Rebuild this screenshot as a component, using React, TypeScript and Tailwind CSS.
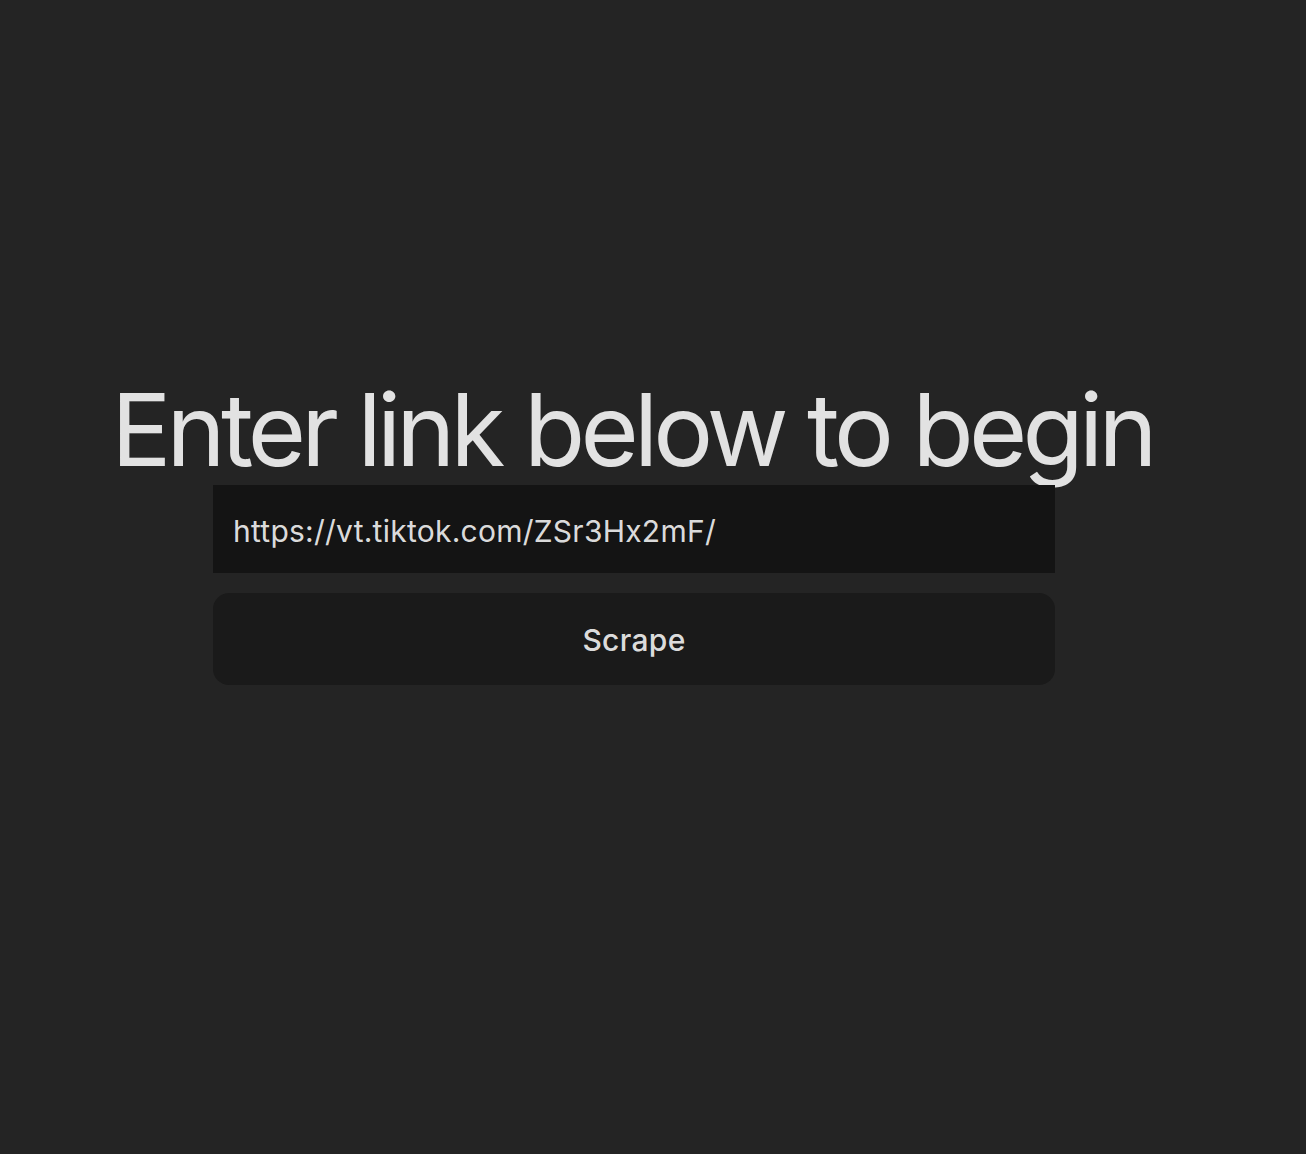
import React, { useState } from "react";

const App = () => {
  const [link, setLink] = useState("https://vt.tiktok.com/ZSr3Hx2mF/");
  return (
    <div className="min-h-[1154px] w-full bg-[#242424] text-[rgba(255,255,255,0.87)] font-['Inter','Liberation_Sans',sans-serif]">
      <div className="flex flex-col items-center pt-[375px] pr-[38px]">
        <h1 className="text-[100px] leading-[110px] tracking-[-4.8px] pr-[4px] font-normal whitespace-nowrap">
          Enter link below to begin
        </h1>
        <div className="flex flex-col gap-5 w-[842px]">
          <input
            value={link}
            onChange={(e) => setLink(e.target.value)}
            className="h-[88px] bg-[#141414] px-5 pt-[3px] text-[30px] tracking-[0.25px] outline-none"
          />
          <button className="h-[92px] rounded-2xl bg-[#1a1a1a] pt-[2px] text-[30px] font-medium tracking-[0.3px]">
            Scrape
          </button>
        </div>
      </div>
    </div>
  );
};

export default App;
